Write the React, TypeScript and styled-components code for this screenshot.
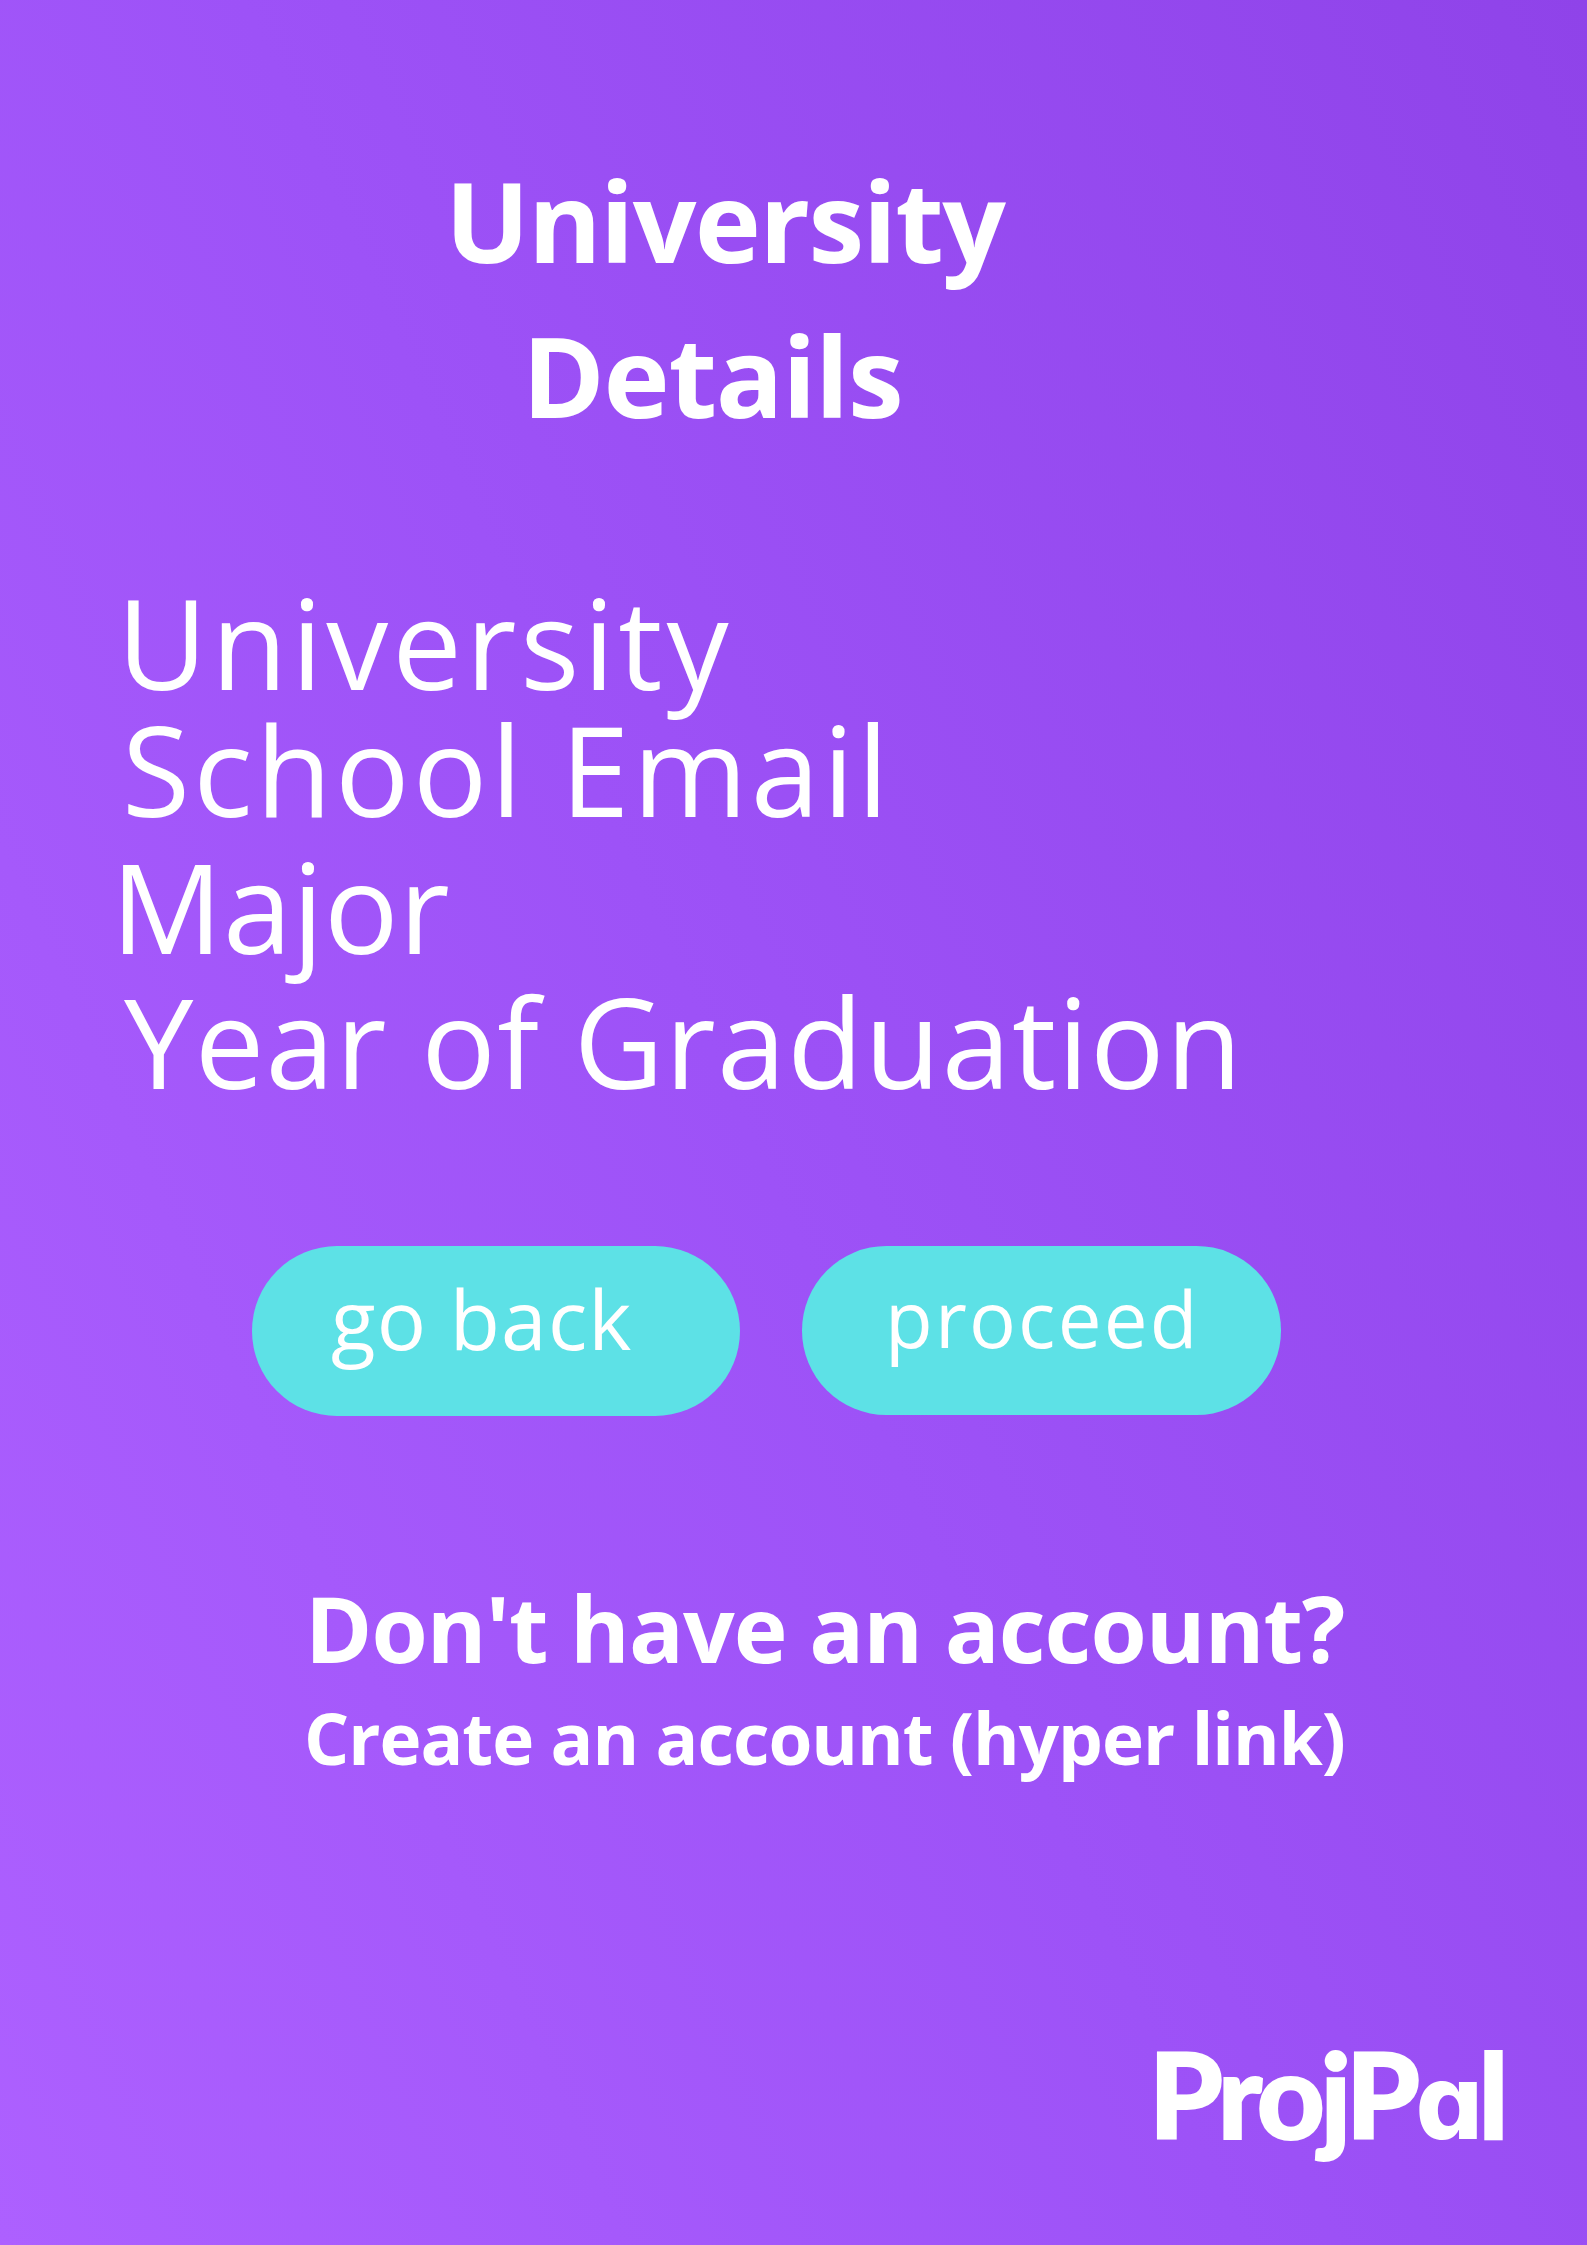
import React from 'react';
import styled, { createGlobalStyle } from 'styled-components';

const GlobalStyle = createGlobalStyle`
  *, *::before, *::after { box-sizing: border-box; }
  body { margin: 0; background: #9d52f6; }
`;

const Page = styled.main`
  display: flex;
  flex-direction: column;
  width: 1587px;
  height: 2245px;
  padding-top: 142px;
  overflow: hidden;
  color: #fff;
  font-family: 'Open Sans', 'Noto Sans', sans-serif;
  background: linear-gradient(66deg, #ad60ff 0%, #9d52f7 48%, #8f43e9 100%);
`;

const Title = styled.h1`
  display: flex;
  flex-direction: column;
  margin: 0;
  font-size: 112px;
  font-weight: 700;
  line-height: 155px;
`;

const TitleLine = styled.span<{ $indent: number; $tracking: number }>`
  margin-left: ${(p) => p.$indent}px;
  letter-spacing: ${(p) => p.$tracking}px;
  white-space: nowrap;
`;

const Fields = styled.ul`
  display: flex;
  flex-direction: column;
  margin: 126px 0 0;
  padding: 0;
  list-style: none;
  font-size: 124px;
  line-height: 127px;
`;

const Field = styled.li<{ $indent: number; $tracking: number; $gap: number }>`
  margin: ${(p) => p.$gap}px 0 0 ${(p) => p.$indent}px;
  letter-spacing: ${(p) => p.$tracking}px;
  white-space: nowrap;
`;

const Actions = styled.div`
  display: flex;
  align-items: flex-start;
  gap: 62px;
  margin: 142px 0 0 252px;
`;

const PillButton = styled.button<{
  $width: number;
  $height: number;
  $inset: number;
  $size: number;
  $tracking: number;
}>`
  display: flex;
  align-items: center;
  width: ${(p) => p.$width}px;
  height: ${(p) => p.$height}px;
  padding: 0 0 26px ${(p) => p.$inset}px;
  border: 0;
  border-radius: 85px;
  background: #5de1e6;
  color: #fff;
  font-family: inherit;
  font-size: ${(p) => p.$size}px;
  font-weight: 400;
  line-height: 110px;
  letter-spacing: ${(p) => p.$tracking}px;
  white-space: nowrap;
`;

const Account = styled.section`
  display: flex;
  flex-direction: column;
  gap: 20px;
  margin-top: 162px;
  font-weight: 700;
  white-space: nowrap;
`;

const Prompt = styled.p`
  margin: 0 0 0 305px;
  font-size: 91px;
  line-height: 100px;
  letter-spacing: -0.96px;
`;

const CreateLink = styled.a`
  margin-left: 304px;
  font-size: 71px;
  line-height: 80px;
  letter-spacing: -1px;
`;

const Brand = styled.footer`
  margin: 246px 0 0 1149px;
  font-family: Lato, sans-serif;
  font-size: 118px;
  font-weight: 900;
  line-height: 140px;
  letter-spacing: -4.3px;
  white-space: nowrap;
  -webkit-text-stroke: 2px #fff;
`;

/* Single-storey "a" of the wordmark */
const RoundA = styled.span`
  font-family: Inter, sans-serif;
  font-size: 105px;
  font-weight: 800;
  line-height: 0;
  font-feature-settings: 'cv11';
  -webkit-text-stroke: 0;
`;

export default function App() {
  return (
    <>
      <GlobalStyle />
      <Page>
        <Title>
          <TitleLine $indent={445} $tracking={-1.6}>University</TitleLine>
          <TitleLine $indent={522} $tracking={-1.3}>Details</TitleLine>
        </Title>
        <Fields>
          <Field $indent={117} $tracking={3.87} $gap={0}>University</Field>
          <Field $indent={122} $tracking={3.2} $gap={0}>School Email</Field>
          <Field $indent={111} $tracking={0.4} $gap={10}>Major</Field>
          <Field $indent={124} $tracking={1.3} $gap={8}>Year of Graduation</Field>
        </Fields>
        <Actions>
          <PillButton $width={488} $height={170} $inset={79} $size={82} $tracking={1.2}>
            go back
          </PillButton>
          <PillButton $width={479} $height={169} $inset={83} $size={78} $tracking={2.2}>
            proceed
          </PillButton>
        </Actions>
        <Account>
          <Prompt>Don't have an account?</Prompt>
          <CreateLink>Create an account (hyper link)</CreateLink>
        </Account>
        <Brand>
          ProjP<RoundA>a</RoundA>l
        </Brand>
      </Page>
    </>
  );
}
